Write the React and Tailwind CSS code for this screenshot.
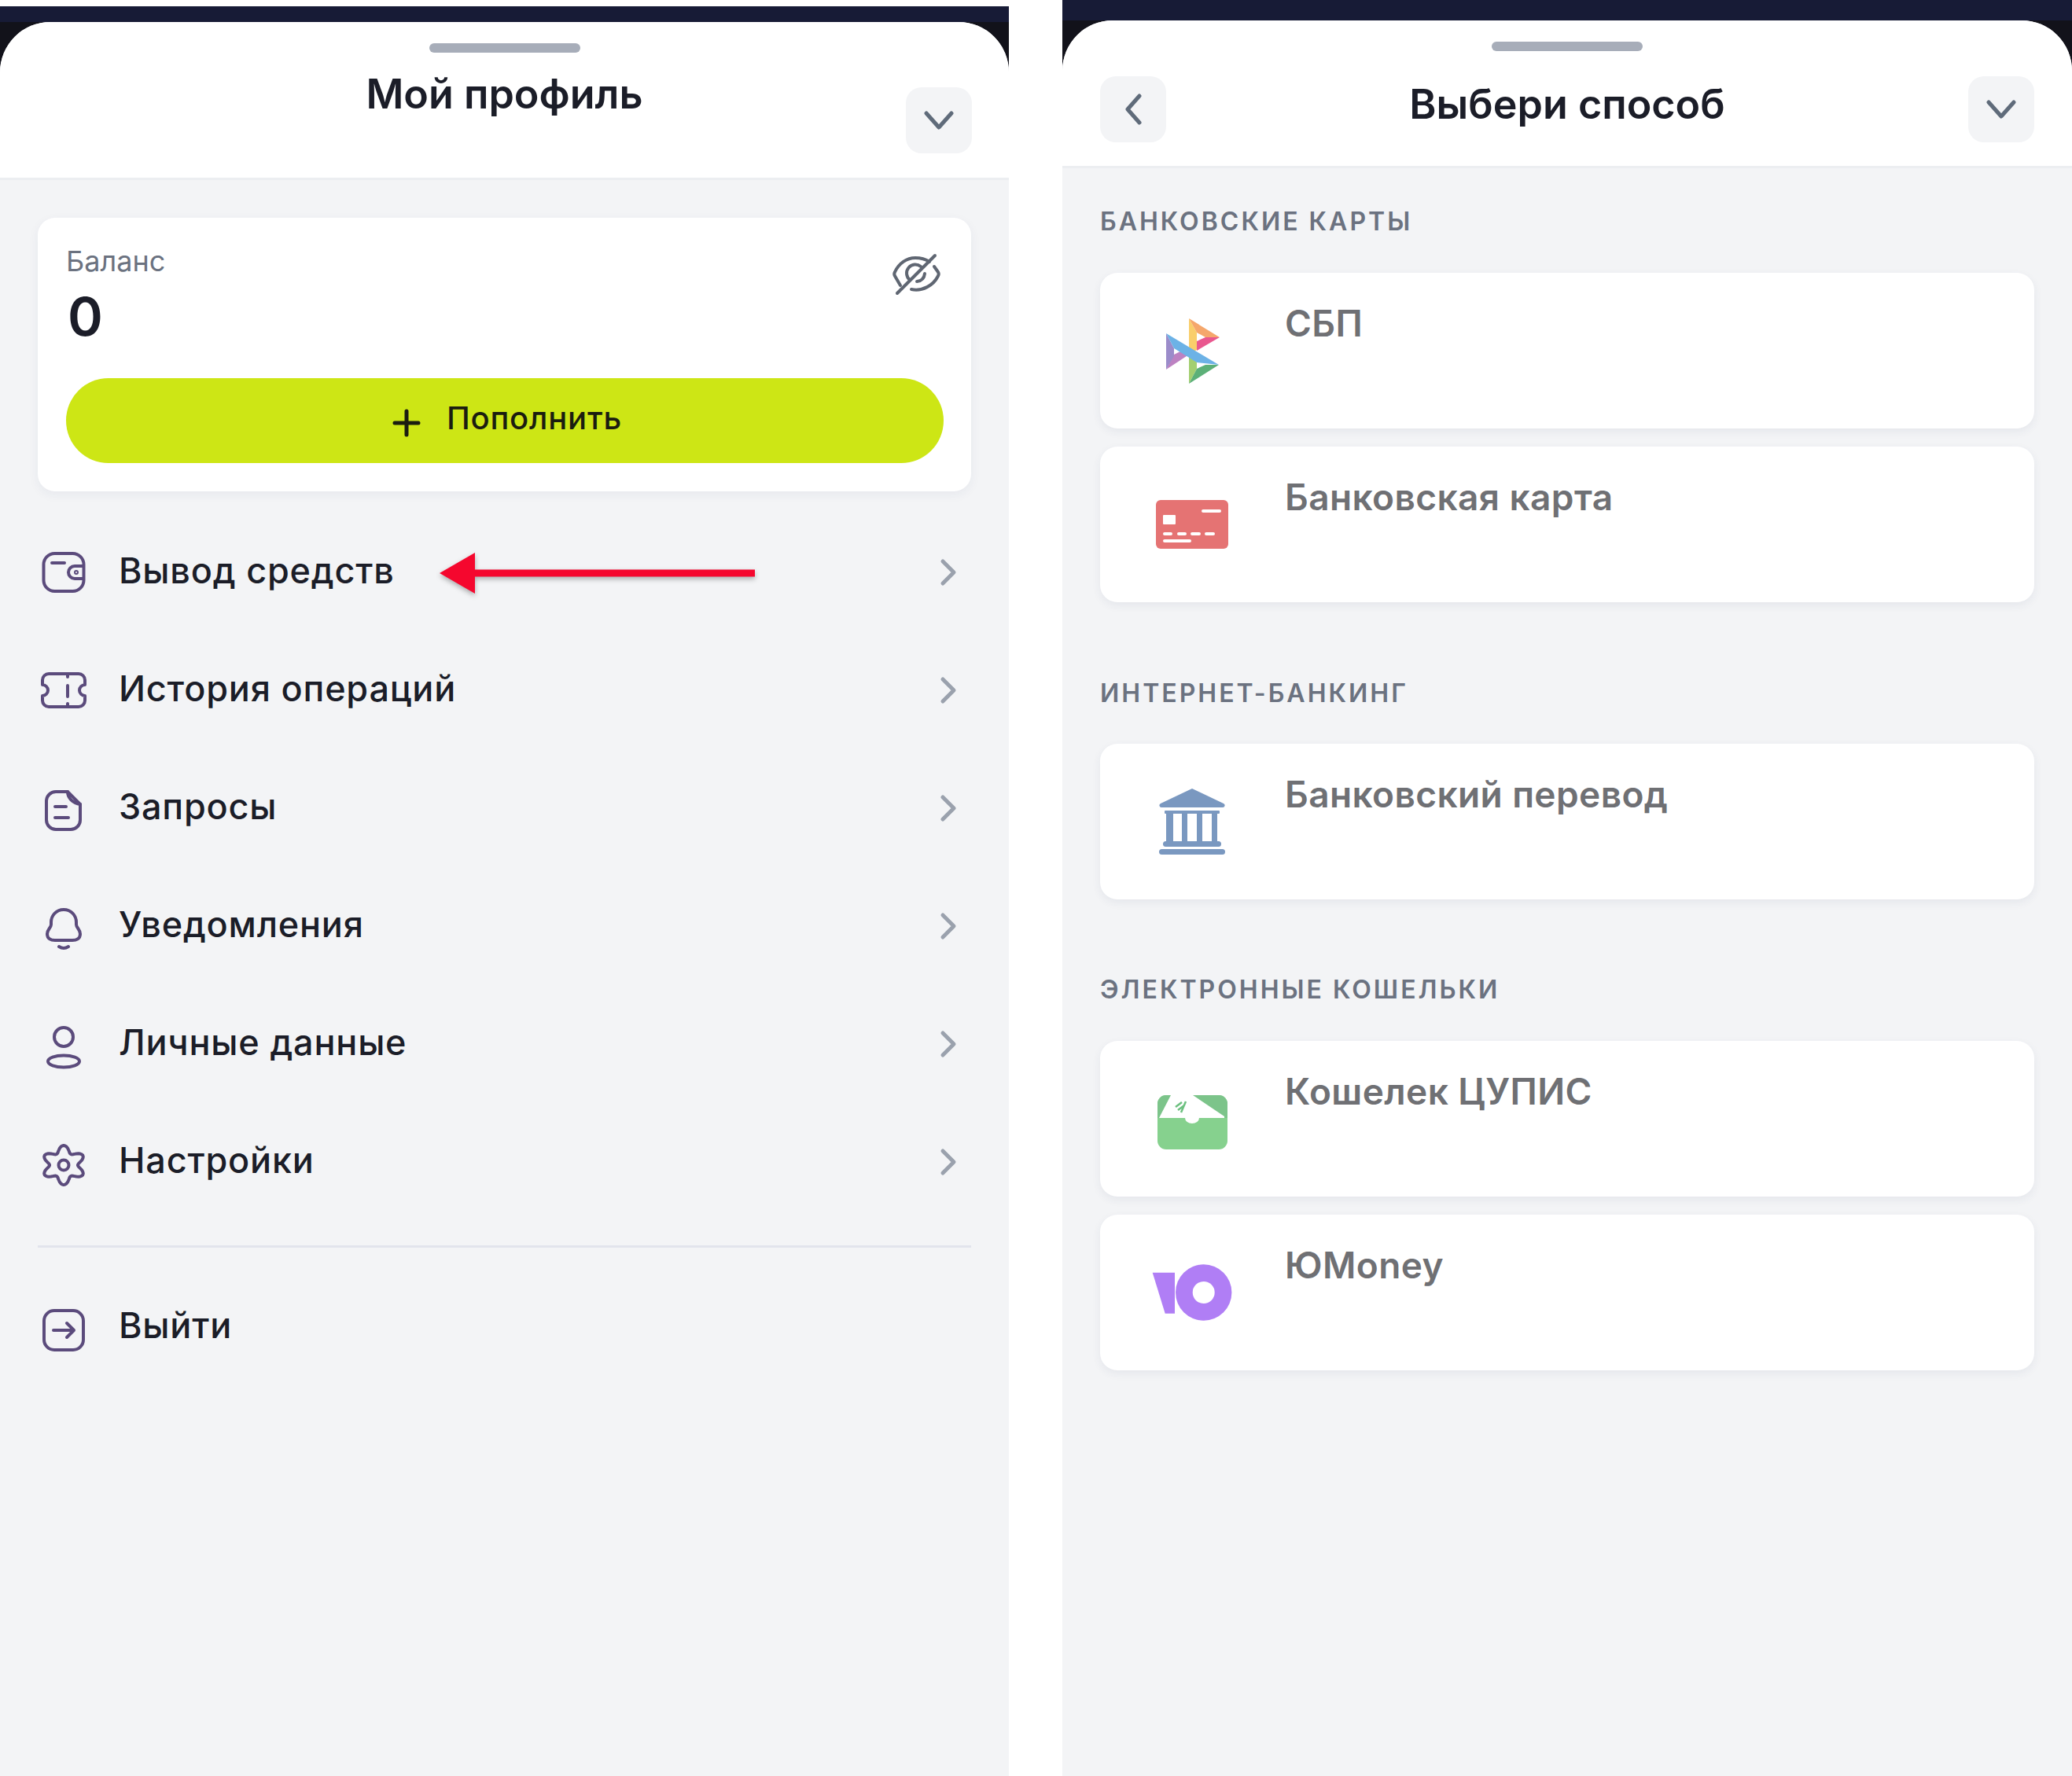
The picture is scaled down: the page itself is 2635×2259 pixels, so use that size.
import React from 'react';

const iconColor = '#5b4b7c';

// six lobed gear outline, stretched a little in x like the original
const gearPath = (() => {
  const pts = [];
  for (let i = 0; i < 96; i++) {
    const a = (i / 96) * Math.PI * 2;
    const r = 20.5 + 4.5 * Math.cos(6 * a);
    pts.push(`${(32 + 1.12 * r * Math.sin(a)).toFixed(1)} ${(36 - r * Math.cos(a)).toFixed(1)}`);
  }
  return `M${pts.join('L')}z`;
})();

const LineIcon = ({ children }) => (
  <svg width="64" height="64" viewBox="0 0 64 64" fill="none" stroke={iconColor} strokeWidth="4" strokeLinecap="round" strokeLinejoin="round" className="shrink-0">
    {children}
  </svg>
);

const menuItems = [
  {
    label: 'Вывод средств',
    icon: (
      <LineIcon>
        <rect x="6.5" y="8" width="51" height="48" rx="14" />
        <path d="M17 20H33" />
        <path d="M57 24H46a8 8 0 0 0 0 16H57" />
        <circle cx="48" cy="32" r="1" />
      </LineIcon>
    ),
  },
  {
    label: 'История операций',
    icon: (
      <LineIcon>
        <path d="M13 11H51a8 8 0 0 1 8 8v6a7 7 0 0 0 0 14v6a8 8 0 0 1-8 8H13a8 8 0 0 1-8-8v-6a7 7 0 0 0 0-14v-6a8 8 0 0 1 8-8z" />
        <path d="M37 11V15M37 26V40M37 49V53" />
      </LineIcon>
    ),
  },
  {
    label: 'Запросы',
    icon: (
      <LineIcon>
        <path d="M22 11H37L53 27V47a12 12 0 0 1-12 12H22a12 12 0 0 1-12-12V23a12 12 0 0 1 12-12z" />
        <path d="M37 11c0 8 7 15 16 16" />
        <path d="M21 30H35M21 44H38" />
      </LineIcon>
    ),
  },
  {
    label: 'Уведомления',
    icon: (
      <LineIcon>
        <path d="M32 11c-10 0-16 8-16 16v3c0 4-5 6-5 12 0 6 5 8 10 8h22c5 0 10-2 10-8 0-6-5-8-5-12v-3c0-8-6-16-16-16z" />
        <path d="M26 58q6 4 12 0" />
      </LineIcon>
    ),
  },
  {
    label: 'Личные данные',
    icon: (
      <LineIcon>
        <circle cx="32" cy="23" r="12" />
        <ellipse cx="32" cy="54" rx="20" ry="7.5" />
      </LineIcon>
    ),
  },
  {
    label: 'Настройки',
    icon: (
      <LineIcon>
        <path d={gearPath} />
        <circle cx="32" cy="36" r="6.5" />
      </LineIcon>
    ),
  },
];

const ChevronDown = () => (
  <svg width="40" height="24" viewBox="0 0 40 24" fill="none" stroke="#5f6b7a" strokeWidth="5" strokeLinecap="round" strokeLinejoin="round">
    <path d="M4 3L20 21L36 3" />
  </svg>
);

const ChevronLeft = () => (
  <svg width="24" height="40" viewBox="0 0 24 40" fill="none" stroke="#5f6b7a" strokeWidth="5" strokeLinecap="round" strokeLinejoin="round">
    <path d="M20 3L5 20L20 37" />
  </svg>
);

const ChevronRight = () => (
  <svg width="24" height="36" viewBox="0 0 24 36" fill="none" stroke="#9aa1ad" strokeWidth="5" strokeLinecap="round" strokeLinejoin="round">
    <path d="M5 4L19 18L5 32" />
  </svg>
);

const SquareButton = ({ children }) => (
  <div className="w-[84px] h-[84px] rounded-[20px] bg-[#f3f4f6] flex items-center justify-center">{children}</div>
);

const SbpLogo = () => (
  <svg width="80" height="90" viewBox="76 40 80 90">
    <polygon points="112,44 122,62 122,84 112,90" fill="#f9ce6b" />
    <polygon points="112,44 151,68 133,68 122,62" fill="#f5a76c" />
    <polygon points="151,68 122,85 122,73 133,68" fill="#e9588f" />
    <polygon points="83,109 93,90 103,85 112,90" fill="#bd82c2" />
    <polygon points="83,63 93,82 93,92 83,109" fill="#9b8cca" />
    <polygon points="112,90 122,100 122,108 112,127" fill="#a3cf70" />
    <polygon points="150,103 133,103 122,108 112,127" fill="#5cb078" />
    <polygon points="83,63 150,103 122,100 93,82" fill="#6cb2e6" />
  </svg>
);

const CardLogo = () => (
  <svg width="92" height="62" viewBox="0 0 92 62">
    <rect width="92" height="62" rx="6" fill="#e57373" />
    <g fill="#fff">
      <rect x="9" y="19" width="16" height="12" rx="1" />
      <rect x="58" y="12" width="25" height="4" rx="2" />
      <rect x="9" y="41" width="12" height="4" rx="2" />
      <rect x="27" y="41" width="12" height="4" rx="2" />
      <rect x="44" y="41" width="13" height="4" rx="2" />
      <rect x="62" y="41" width="13" height="4" rx="2" />
      <rect x="9" y="50" width="36" height="4" rx="2" />
    </g>
  </svg>
);

const BankLogo = () => (
  <svg width="92" height="92" viewBox="70 40 92 92" fill="#7a98c0">
    <path d="M116 44L156 63a2.6 2.6 0 0 1-1 5H77a2.6 2.6 0 0 1-1-5z" />
    <rect x="81" y="72" width="70" height="4" rx="1" />
    <rect x="83" y="76" width="9" height="35" />
    <rect x="103" y="76" width="7" height="35" />
    <rect x="122" y="76" width="7" height="35" />
    <rect x="141" y="76" width="7" height="35" />
    <rect x="79" y="111" width="74" height="7" rx="3.5" />
    <rect x="74" y="121" width="84" height="7" rx="3.5" />
  </svg>
);

const WalletLogo = () => (
  <svg width="96" height="91" viewBox="68 18 96 91">
    <rect x="72" y="33" width="89" height="69" rx="11" fill="#86d18e" />
    <path d="M72 62V44a11 11 0 0 1 11-11H150a11 11 0 0 1 11 11V62z" fill="#7cc48a" />
    <path d="M74 62L89 33H117L157 60V62H125a9 7 0 0 1-18 0z" fill="#fff" />
    <path d="M95 48L103 42M98 52L106 46M102 55L108 41" stroke="#6cc07f" strokeWidth="2.5" fill="none" />
  </svg>
);

const YooLogo = () => (
  <svg width="104" height="76" viewBox="64 248 104 76" fill="#b07ef5">
    <path d="M65.7 260.7H94V312.7H81.7z" />
    <circle cx="130.7" cy="286" r="35.7" />
    <circle cx="130.7" cy="286" r="14" fill="#fff" />
  </svg>
);

const PayCard = ({ title, logo, className = '' }) => (
  <div className={`h-[198px] rounded-[22px] bg-white shadow-[0_4px_12px_rgba(40,50,100,0.07)] flex ${className}`}>
    <div className="w-[233px] mr-[2px] shrink-0 flex items-center justify-center">{logo}</div>
    <div className="pt-[36px] text-[46px] leading-[56px] font-semibold tracking-[0.4px] text-[#6f7074]">{title}</div>
  </div>
);

const SectionLabel = ({ children, className = '' }) => (
  <div className={`text-[32px] leading-[40px] font-semibold tracking-[3px] text-[#6b7280] ${className}`}>{children}</div>
);

const App = () => {
  return (
    <div className="w-[2635px] h-[2259px] bg-white flex justify-between overflow-hidden font-['Inter',sans-serif]">
      {/* Left phone: profile */}
      <div className="w-[1283px] pt-2 flex flex-col">
        <div className="flex-1 bg-[#12121a] flex flex-col">
          <div className="h-5 bg-[#171b36]" />
          <div className="flex-1 rounded-t-[64px] bg-[#f3f4f6] overflow-hidden flex flex-col">
            <div className="h-[201px] bg-white border-b-[3px] border-[#eceef1] flex flex-col items-center">
              <div className="mt-[27px] w-[192px] h-3 rounded-full bg-[#a7adb9]" />
              <div className="w-full mt-[44px] px-[47px] grid grid-cols-[84px_1fr_84px]">
                <div />
                <div className="-mt-[23px] text-center text-[52px] leading-[64px] font-semibold text-[#1b1d28]">Мой профиль</div>
                <SquareButton><ChevronDown /></SquareButton>
              </div>
            </div>

            <div className="px-[48px] pt-[48px] flex flex-col">
              <div className="h-[348px] rounded-[22px] bg-white shadow-[0_4px_14px_rgba(40,50,100,0.06)] pl-[36px] pr-[35px] flex flex-col">
                <div className="flex justify-between items-start">
                  <div className="mt-[33px] text-[36px] leading-[44px] text-[#6b7280]">Баланс</div>
                  <svg width="64" height="56" viewBox="0 0 64 56" fill="none" stroke="#5f6672" strokeWidth="4" strokeLinecap="round" strokeLinejoin="round" className="mt-[44px] -mb-[30px] mr-[3px]">
                    <path d="M8 52L56 4" />
                    <path d="M12 42L5 30q-1.5-2.5 0-5C10 14 20 7 31 7c6 0 12 1 18 5" />
                    <path d="M55 18l5 7q1.5 2.5 0 5C54 42 40 50 26 47" />
                    <path d="M24 35a11 11 0 0 1 14-17" />
                    <path d="M33 37q9-1 10-10" />
                  </svg>
                </div>
                <div className="mt-[8px] ml-[2px] text-[68px] leading-[80px] font-semibold text-[#1b1d28]">0</div>
                <div className="mt-[39px] h-[108px] rounded-full bg-[#cde615] pl-[6px] flex items-center justify-center gap-[33px]">
                  <svg width="36" height="36" viewBox="0 0 36 36" fill="none" stroke="#1b1d10" strokeWidth="5" strokeLinecap="round" className="mt-[6px]">
                    <path d="M18 3V33M3 18H33" />
                  </svg>
                  <span className="text-[40px] leading-[50px] font-medium tracking-[0.8px] text-[#1b1d10] -mt-[6px]">Пополнить</span>
                </div>
              </div>

              <div className="mt-[28px] flex flex-col">
                {menuItems.map((item, index) => (
                  <div key={item.label} className="relative h-[150px] flex items-center">
                    <div className="ml-px mr-[38px]">{item.icon}</div>
                    <span className="flex-1 text-[45px] leading-[56px] font-medium tracking-[0.8px] text-[#1b1d28] -mt-[5px]">{item.label}</span>
                    <div className="mr-[17px]"><ChevronRight /></div>
                    {index === 0 && (
                      <svg width="410" height="60" viewBox="0 0 410 60" className="absolute left-[508px] top-[46px] drop-shadow-[0_3px_3px_rgba(0,0,0,0.3)]">
                        <path d="M3 30L48 4V25.500H404V34.500H48V56z" fill="#f5072e" />
                      </svg>
                    )}
                  </div>
                ))}
              </div>

              <div className="mt-[31px] h-[3px] bg-[#e2e4ec]" />

              <div className="mt-[26px] h-[150px] flex items-center">
                <div className="ml-px mr-[38px]">
                  <LineIcon>
                    <rect x="7" y="11" width="50" height="50" rx="13" />
                    <path d="M19 36H44M36 27L45 36L36 45" />
                  </LineIcon>
                </div>
                <span className="text-[45px] leading-[56px] font-medium tracking-[0.8px] text-[#1b1d28] -mt-[4px]">Выйти</span>
              </div>
            </div>
          </div>
        </div>
      </div>

      {/* Right phone: payment method */}
      <div className="w-[1284px] flex flex-col">
        <div className="flex-1 bg-[#12121a] flex flex-col">
          <div className="h-[26px] bg-[#171b36]" />
          <div className="flex-1 rounded-t-[64px] bg-[#f3f4f6] overflow-hidden flex flex-col">
            <div className="h-[188px] bg-white border-b-[3px] border-[#eceef1] flex flex-col items-center">
              <div className="mt-[27px] w-[192px] h-3 rounded-full bg-[#a7adb9]" />
              <div className="w-full mt-[32px] px-[48px] grid grid-cols-[84px_1fr_84px]">
                <SquareButton><ChevronLeft /></SquareButton>
                <div className="mt-[4px] text-center text-[52px] leading-[64px] font-semibold text-[#1b1d28]">Выбери способ</div>
                <SquareButton><ChevronDown /></SquareButton>
              </div>
            </div>

            <div className="pl-[48px] pr-[48px] pt-[48px] flex flex-col">
              <SectionLabel>БАНКОВСКИЕ КАРТЫ</SectionLabel>
              <PayCard className="mt-[45px]" title="СБП" logo={<SbpLogo />} />
              <PayCard className="mt-[23px]" title="Банковская карта" logo={<CardLogo />} />
              <SectionLabel className="mt-[96px]">ИНТЕРНЕТ-БАНКИНГ</SectionLabel>
              <PayCard className="mt-[44px]" title="Банковский перевод" logo={<BankLogo />} />
              <SectionLabel className="mt-[95px]">ЭЛЕКТРОННЫЕ КОШЕЛЬКИ</SectionLabel>
              <PayCard className="mt-[45px]" title="Кошелек ЦУПИС" logo={<WalletLogo />} />
              <PayCard className="mt-[23px]" title="ЮMoney" logo={<YooLogo />} />
            </div>
          </div>
        </div>
      </div>
    </div>
  );
};

export default App;
